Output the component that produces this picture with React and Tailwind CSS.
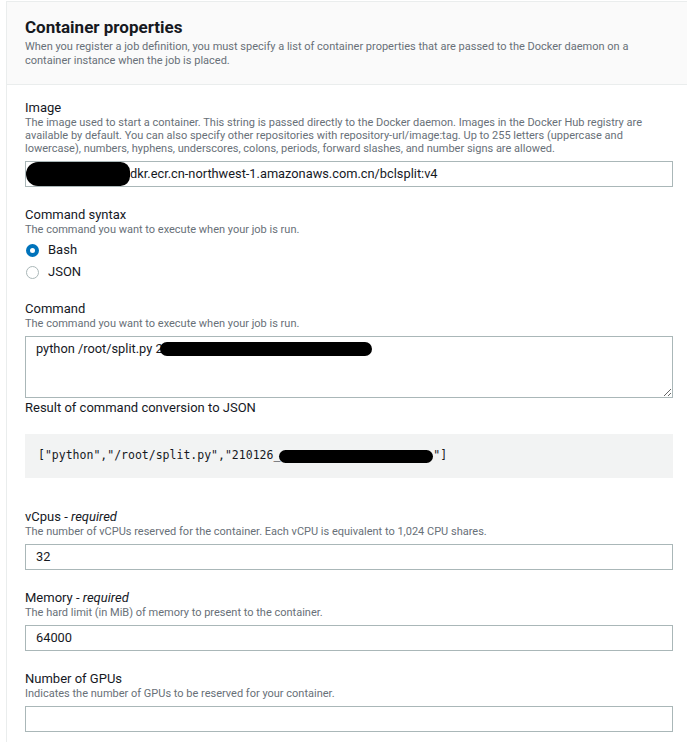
const font = { fontFamily: 'Roboto, "Liberation Sans", sans-serif' };

const Blob = ({ className }) => <span className={`inline-block bg-black ${className}`} />;

const Field = ({ label, req, desc, children, className = '' }) => (
  <div className={className}>
    <div className="text-[13px] leading-[17px] text-[#16191f]">
      {label}
      {req && (
        <>
          {' - '}
          <i>required</i>
        </>
      )}
    </div>
    <div className="text-[11px] leading-[13px] text-[#687078]">{desc}</div>
    {children}
  </div>
);

const Box = ({ children }) => (
  <div className="mt-[6px] flex h-[26px] items-center border border-[#aab7b8] bg-white px-[10px] text-[12.8px] text-[#16191f]">
    {children}
  </div>
);

const Radio = ({ on, label }) => (
  <div className="flex h-[22px] items-center gap-[9px] pl-px text-[13px] text-[#16191f]">
    {on ? (
      <span className="h-[13px] w-[13px] rounded-full border-[4px] border-[#0073bb] bg-white" />
    ) : (
      <span className="h-[13px] w-[13px] rounded-full border border-[#aab7b8] bg-white" />
    )}
    {label}
  </div>
);

export default function App() {
  return (
    <div className="w-full overflow-hidden bg-white" style={font}>
      <div className="ml-[6px] mt-px w-[686px] border border-[#eaeded]">
        <div className="border-b border-[#eaeded] bg-[#fafafa] px-[18px] pb-[16px] pt-[14px]">
          <h2 className="text-[17px] font-bold leading-[22px] text-[#16191f]">Container properties</h2>
          <p className="mt-[2px] text-[11px] leading-[14px] text-[#687078]">
            When you register a job definition, you must specify a list of container properties that are passed to the Docker daemon on a
            <br />
            container instance when the job is placed.
          </p>
        </div>

        <div className="px-[18px] pb-6 pt-[14px]">
          <Field
            label="Image"
            desc={
              <>
                The image used to start a container. This string is passed directly to the Docker daemon. Images in the Docker Hub registry are
                <br />
                available by default. You can also specify other repositories with repository-url/image:tag. Up to 255 letters (uppercase and
                <br />
                lowercase), numbers, hyphens, underscores, colons, periods, forward slashes, and number signs are allowed.
              </>
            }
          >
            <div className="mt-[6px] flex h-[26px] items-center border border-[#aab7b8] bg-white text-[12.8px] text-[#16191f]">
              <Blob className="h-[24px] w-[104px] rounded-l-[14px] rounded-r-[11px]" />
              <span>dkr.ecr.cn-northwest-1.amazonaws.com.cn/bclsplit:v4</span>
            </div>
          </Field>

          <Field className="mt-[19px]" label="Command syntax" desc="The command you want to execute when your job is run.">
            <div className="mt-[3px]">
              <Radio on label="Bash" />
              <Radio label="JSON" />
            </div>
          </Field>

          <Field className="mt-[17px]" label="Command" desc="The command you want to execute when your job is run.">
            <div className="relative mt-[6px]">
              <textarea
                readOnly
                defaultValue="python /root/split.py 2"
                className="block h-[62px] w-full resize-y border border-[#aab7b8] bg-white px-[10px] py-[3px] text-[12.8px] leading-[17px] text-[#16191f] outline-none"
                style={font}
              />
              <Blob className="absolute left-[135px] top-[6px] h-[14px] w-[212px] rounded-full" />
            </div>
          </Field>

          <div className="mt-px text-[13px] leading-[17px] text-[#16191f]">Result of command conversion to JSON</div>
          <div
            className="mt-[18px] flex h-[44px] items-center bg-[#f2f3f3] px-[13px] text-[11.5px] text-[#16191f]"
            style={{ fontFamily: '"DejaVu Sans Mono", "Liberation Mono", monospace' }}
          >
            <span>["python","/root/split.py","210126_</span>
            <Blob className="-ml-px h-[13px] w-[154px] rounded-full" />
            <span>"]</span>
          </div>

          <Field
            className="mt-[30px]"
            label="vCpus"
            req
            desc="The number of vCPUs reserved for the container. Each vCPU is equivalent to 1,024 CPU shares."
          >
            <Box>32</Box>
          </Field>

          <Field className="mt-[19px]" label="Memory" req desc="The hard limit (in MiB) of memory to present to the container.">
            <Box>64000</Box>
          </Field>

          <Field className="mt-[19px]" label="Number of GPUs" desc="Indicates the number of GPUs to be reserved for your container.">
            <Box />
          </Field>
        </div>
      </div>
    </div>
  );
}
